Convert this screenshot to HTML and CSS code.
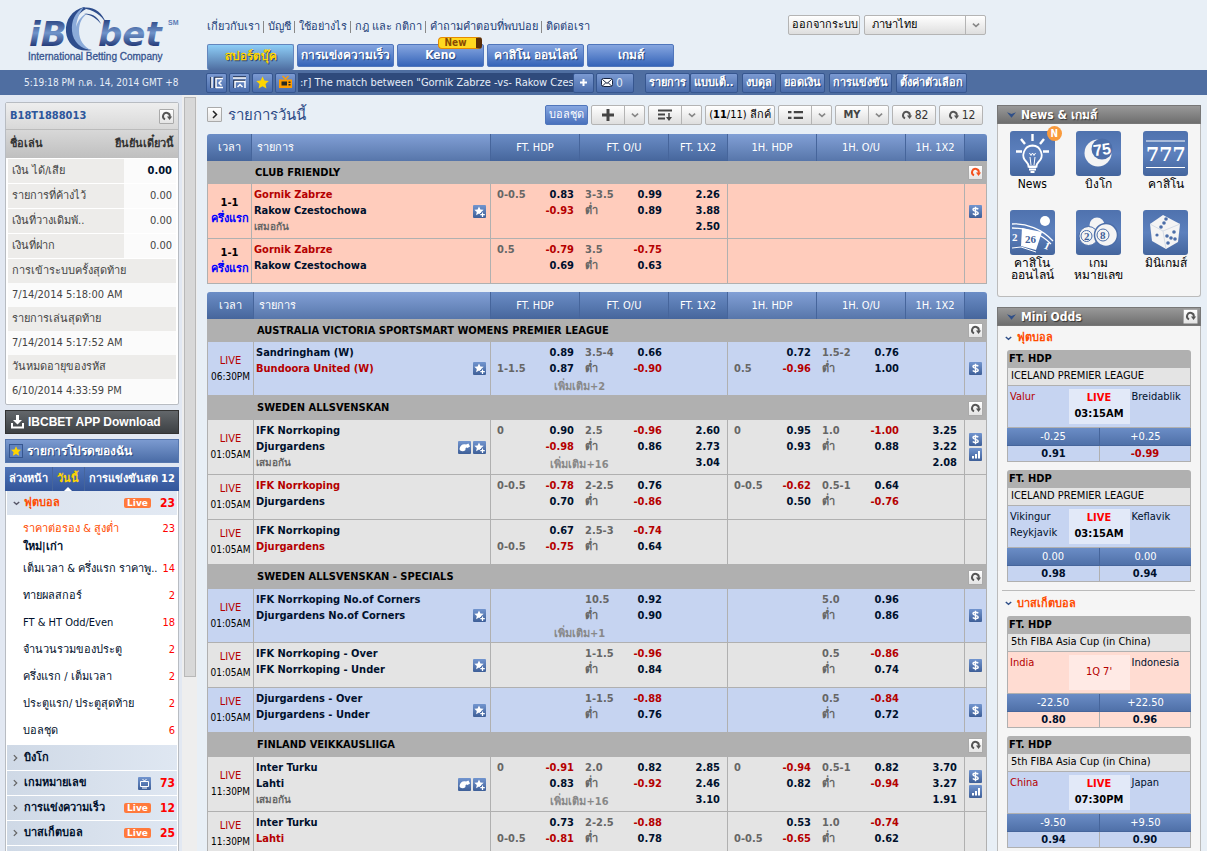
FILE: index.html
```html
<!DOCTYPE html>
<html lang="th">
<head>
<meta charset="utf-8">
<title>IBCBET</title>
<link rel="stylesheet" href="styles.css">
</head>
<body>
<svg class="defs" aria-hidden="true">
  <linearGradient id="g-blue" x1="0" y1="0" x2="0" y2="1"><stop offset="0" stop-color="#7295cf"/><stop offset="1" stop-color="#3e5f98"/></linearGradient>
  <symbol id="i-refresh" viewBox="0 0 15 15"><path d="M5.8 10.8A3.9 3.9 0 1 1 11.2 8" fill="none" stroke="currentColor" stroke-width="2.2"/><path d="M8 7.6h6l-3 4z" fill="currentColor"/></symbol>
  <symbol id="i-star" viewBox="0 0 16 16"><path d="M8 1.5l2 4.4 4.700.500-3.500 3.200 1 4.700L8 11.900l-4.200 2.400 1-4.700L1.300 6.400 6 5.900z" fill="currentColor"/></symbol>
  <symbol id="i-staradd" viewBox="0 0 13 13"><rect width="13" height="13" rx="1" fill="url(#g-blue)"/><path d="M6 1.500l1.400 3 3.300.300-2.500 2.200.700 3.200L6 8.600l-2.900 1.600.700-3.200L1.300 4.800l3.300-.300z" fill="#fff"/><path d="M9.500 7v5M7 9.500h5" stroke="#4b6ea8" stroke-width="3"/><path d="M9.500 7.500v4.500M7.300 9.700h4.500" stroke="#fff" stroke-width="1.200"/></symbol>
  <symbol id="i-whistle" viewBox="0 0 13 13"><rect width="13" height="13" rx="1" fill="url(#g-blue)"/><path d="M1.500 8C2 4 5 2.500 8 3.500L10.500 2.500l1.500 3-2.500 1.500C8.500 5.500 7 7 7.500 9 5.500 11 2 10.500 1.500 8z" fill="#fff"/></symbol>
  <symbol id="i-dollar" viewBox="0 0 13 13"><rect width="13" height="13" rx="1" fill="url(#g-blue)"/><path d="M9.300 4.300C8 2.900 4 2.900 4 4.800c0 2 5.200 1.200 5.200 3.300 0 2-4 2-5.400.400M6.500 1.800v9.400" fill="none" stroke="#fff" stroke-width="1.400"/></symbol>
  <symbol id="i-bars" viewBox="0 0 13 13"><rect width="13" height="13" rx="1" fill="url(#g-blue)"/><path d="M3 8h2v2.500H3zM6 6h2v4.500H6zM9 3h2v7.500H9z" fill="#fff"/></symbol>
  <symbol id="i-down" viewBox="0 0 9 6"><path d="M1 1l3.500 3L8 1" fill="none" stroke="currentColor" stroke-width="1.800"/></symbol>
  <symbol id="i-right" viewBox="0 0 6 9"><path d="M1 1l3.500 3.500L1 8" fill="none" stroke="currentColor" stroke-width="1.500"/></symbol>
  <symbol id="i-tri" viewBox="0 0 10 6"><path d="M0 0l5 2 5-2-5 6z" fill="currentColor"/></symbol>
</svg>

<header class="top">
  <svg class="logo" viewBox="0 0 190 70" role="img" aria-label="ibcbet International Betting Company">
    <defs><linearGradient id="g-logo" gradientUnits="userSpaceOnUse" x1="0" y1="19" x2="0" y2="47"><stop offset="0" stop-color="#27407f"/><stop offset=".5" stop-color="#7094ca"/><stop offset="1" stop-color="#1f3574"/></linearGradient></defs>
    <g class="logo-word" fill="url(#g-logo)"><text x="29" y="46">iB</text><text x="98" y="46">bet</text></g>
    <path d="M84 7C72 10 65 20 66 32c1 12 11 21 26 18-10-1-18-9-18-20 0-9 4-17 12-21z" fill="#2e4d8c"/>
    <path d="M84 7c-9 5-13 14-12 24 1 11 9 18 19 19-7-3-12-10-12-19 0-8 3-14 9-18-6 2-10 7-12 14 1-9 4-15 8-20z" fill="#8cabd9"/>
    <path d="M82 8c11-2 20 4 24 15-5-8-12-13-24-15z" fill="#2e4d8c"/>
    <path d="M84 14c8-1 14 3 17 10-4-5-9-9-17-10z" fill="#2e4d8c"/>
    <text class="logo-sm" x="168" y="25">SM</text>
    <text class="logo-sub" x="28" y="60">International Betting Company</text>
  </svg>
  <div class="top-main">
    <div class="top-row">
      <nav class="links"><a href="#">เกี่ยวกับเรา</a><a href="#">บัญชี</a><a href="#">ใช้อย่างไร</a><a href="#">กฎ และ กติกา</a><a href="#">คำถามคำตอบที่พบบ่อย</a><a href="#">ติดต่อเรา</a></nav>
      <div class="account"><button class="btn">ออกจากระบบ</button><span class="lang"><select aria-label="ภาษา"><option>ภาษาไทย</option></select><svg class="chev"><use href="#i-down"/></svg></span></div>
    </div>
    <nav class="tabs">
      <a class="tab on" href="#">สปอร์ตบุ๊ค</a><a class="tab w97" href="#">การแข่งความเร็ว</a><a class="tab keno" href="#">Keno<span class="new">New</span></a><a class="tab w97" href="#">คาสิโน ออนไลน์</a><a class="tab" href="#">เกมส์</a>
    </nav>
  </div>
</header>

<div class="bar">
  <time class="clock">5:19:18 PM ก.ค. 14, 2014 GMT +8</time>
  <div class="bar-main">
    <button class="sq" aria-label="ซ่อนเมนู"><svg viewBox="0 0 15 15"><path d="M2 2v11M6 13V2.500h7.500" fill="none" stroke="#1c2c4e" stroke-width="1.500"/><path d="M3 2v11M7 13V3.500h7M7 12.500h7" fill="none" stroke="#fff" stroke-width="1.500"/><path d="M12.500 5.500L10 8l2.500 2.500" fill="none" stroke="#fff" stroke-width="1.500"/></svg></button>
    <button class="sq" aria-label="ซ่อนส่วนหัว"><svg viewBox="0 0 15 15"><path d="M1 2h13M2 13V5.500h11" fill="none" stroke="#1c2c4e" stroke-width="1.500"/><path d="M1 3h13M3 13V6.500h10V13" fill="none" stroke="#fff" stroke-width="1.500"/><path d="M5.500 12L8 9.500l2.500 2.500" fill="none" stroke="#fff" stroke-width="1.500"/></svg></button>
    <button class="sq gold" aria-label="รายการโปรด"><svg><use href="#i-star"/></svg></button>
    <button class="sq" aria-label="ทีวี"><svg viewBox="0 0 15 15"><path d="M1 4.500h13v8.500H1z" fill="#ff9c00"/><path d="M4.500 1l3 3 3-3" fill="none" stroke="#ff9c00" stroke-width="1.400"/><path d="M3.500 6.500h5.500v4H3.500zM10.500 6.500h2v1.500h-2zM10.500 9h2v1.500h-2z" fill="#2a2a20"/></svg></button>
    <div class="ticker">:r] The match between "Gornik Zabrze -vs- Rakow Czesl</div>
    <button class="sq plus" aria-label="เพิ่มเติม"><svg viewBox="0 0 15 15"><path d="M7.500 4v7M4 7.500h7" stroke="#fff" stroke-width="2"/></svg></button>
    <button class="mail"><svg viewBox="0 0 12 9"><rect x=".5" y=".5" width="11" height="8" rx="2" fill="#fff" stroke="#16233f"/><path d="M1.500 1.500L6 5.500l4.500-4M1.500 8L5 4.500M10.500 8L7 4.500" fill="none" stroke="#16233f"/></svg>0</button>
    <nav class="menu"><span class="pair"><a href="#">รายการ</a><a href="#">แบบเต็..</a></span><a href="#">งบดุล</a><a href="#">ยอดเงิน</a><a href="#">การแข่งขัน</a><a href="#">ตั้งค่าตัวเลือก</a></nav>
  </div>
</div>

<div class="page">
<aside class="left">
  <div class="left-body">
    <section class="acct">
      <div class="acct-id"><b>B18T1888013</b><button class="rf" aria-label="รีเฟรช"><svg><use href="#i-refresh"/></svg></button></div>
      <div class="acct-nick"><b>ชื่อเล่น</b><b>ยืนยันเดี๋ยวนี้</b></div>
      <dl class="money">
        <dt>เงิน ได้/เสีย</dt><dd class="strong">0.00</dd>
        <dt>รายการที่ค้างไว้</dt><dd>0.00</dd>
        <dt>เงินที่วางเดิมพั..</dt><dd>0.00</dd>
        <dt>เงินที่ฝาก</dt><dd>0.00</dd>
      </dl>
      <dl class="dates">
        <dt>การเข้าระบบครั้งสุดท้าย</dt><dd>7/14/2014 5:18:00 AM</dd>
        <dt>รายการเล่นสุดท้าย</dt><dd>7/14/2014 5:17:52 AM</dd>
        <dt>วันหมดอายุของรหัส</dt><dd>6/10/2014 4:33:59 PM</dd>
      </dl>
    </section>
    <button class="app"><svg viewBox="0 0 13 14"><path d="M5 0h3v5h3L6.500 9.500 2 5h3z" fill="#fff"/><path d="M1 8v4.500h11V8" fill="none" stroke="#fff" stroke-width="2"/></svg>IBCBET APP Download</button>
    <button class="fav"><span class="favstar"><svg><use href="#i-star"/></svg></span>รายการโปรดของฉัน</button>
    <nav class="days"><a href="#">ล่วงหน้า</a><a class="on" href="#">วันนี้</a><a href="#">การแข่งขันสด 12</a></nav>
    <nav class="sports">
      <a class="sport open" href="#"><svg class="cd"><use href="#i-down"/></svg><span class="name">ฟุตบอล</span><span class="live">Live</span><b>23</b></a>
      <div class="bets">
        <a class="bet hot" href="#"><span>ราคาต่อรอง &amp; สูงต่ำ</span><i>23</i></a>
        <div class="newold"><a href="#">ใหม่</a>|<a href="#">เก่า</a></div>
        <a class="bet" href="#"><span>เต็มเวลา &amp; ครึ่งแรก ราคาพู..</span><i>14</i></a>
        <a class="bet" href="#"><span>ทายผลสกอร์</span><i>2</i></a>
        <a class="bet" href="#"><span>FT &amp; HT Odd/Even</span><i>18</i></a>
        <a class="bet" href="#"><span>จำนวนรวมของประตู</span><i>2</i></a>
        <a class="bet" href="#"><span>ครึ่งแรก / เต็มเวลา</span><i>2</i></a>
        <a class="bet" href="#"><span>ประตูแรก/ ประตูสุดท้าย</span><i>2</i></a>
        <a class="bet" href="#"><span>บอลชุด</span><i>6</i></a>
      </div>
      <a class="sport" href="#"><svg class="cr"><use href="#i-right"/></svg><span class="name">บิงโก</span></a>
      <a class="sport" href="#"><svg class="cr"><use href="#i-right"/></svg><span class="name">เกมหมายเลข</span><svg class="tv" viewBox="0 0 13 13"><rect width="13" height="13" rx="1" fill="url(#g-blue)"/><path d="M2.500 4.500h8v5h-8zM4.500 2l2 2 2-2M4 11h5" fill="none" stroke="#fff" stroke-width="1"/></svg><b>73</b></a>
      <a class="sport" href="#"><svg class="cr"><use href="#i-right"/></svg><span class="name">การแข่งความเร็ว</span><span class="live">Live</span><b>12</b></a>
      <a class="sport" href="#"><svg class="cr"><use href="#i-right"/></svg><span class="name">บาสเก็ตบอล</span><span class="live">Live</span><b>25</b></a>
      <a class="sport" href="#"><svg class="cr"><use href="#i-right"/></svg></a>
    </nav>
  </div>
  <div class="scroll"><div class="thumb"></div></div>
</aside>

<main class="main">
  <div class="tools">
    <button class="rf" aria-label="ขยาย"><svg class="go"><use href="#i-right"/></svg></button>
    <h1>รายการวันนี้</h1>
    <button class="btn blue">บอลชุด</button>
    <button class="btn split" aria-label="เพิ่ม"><span><svg viewBox="0 0 12 12"><path d="M6 0v12M0 6h12" stroke="#444" stroke-width="3"/></svg></span><svg class="chev"><use href="#i-down"/></svg></button>
    <button class="btn split" aria-label="เรียง"><span><svg viewBox="0 0 15 12"><path d="M0 1.500h14M0 5.500h7M0 9.500h7" stroke="#444" stroke-width="2"/><path d="M11 4v6" stroke="#444" stroke-width="1.500"/><path d="M8 8h6l-3 4z" fill="#444"/></svg></span><svg class="chev"><use href="#i-down"/></svg></button>
    <button class="btn leagues">(<b>11</b>/11) ลีกค์</button>
    <button class="btn split" aria-label="มุมมอง"><span><svg viewBox="0 0 13 8"><path d="M0 1.500h3M0 6.500h3M5 1.500h8M5 6.500h8" stroke="#444" stroke-width="2"/></svg></span><svg class="chev"><use href="#i-down"/></svg></button>
    <button class="btn split"><span><b>MY</b></span><svg class="chev"><use href="#i-down"/></svg></button>
    <button class="btn count"><svg><use href="#i-refresh"/></svg>82</button>
    <button class="btn count red"><svg><use href="#i-refresh"/></svg>12</button>
  </div>

  <table class="odds">
    <colgroup><col class="c-time"><col><col class="c-pair"><col class="c-pair"><col class="c-x"><col class="c-pair"><col class="c-pair"><col class="c-x"><col class="c-ico"></colgroup>
    <thead><tr><th>เวลา</th><th class="ev">รายการ</th><th>FT. HDP</th><th>FT. O/U</th><th>FT. 1X2</th><th class="lt">1H. HDP</th><th class="lt">1H. O/U</th><th class="lt">1H. 1X2</th><th></th></tr></thead>
    <tbody>
    <tr class="league"><td></td><td colspan="7">CLUB FRIENDLY</td><td><button class="rf red" aria-label="รีเฟรช"><svg><use href="#i-refresh"/></svg></button></td></tr>
    <tr class="live-row"><td class="time"><b>1-1</b><em>ครึ่งแรก</em></td><td class="event"><div class="ev-in"><div><p class="fav-team">Gornik Zabrze</p><p>Rakow Czestochowa</p><p class="draw">เสมอกัน</p></div><svg><use href="#i-staradd"/></svg></div></td>
      <td colspan="3"><div class="grp"><i class="hl">0-0.5</i><b class="hp">0.83</b><i class="ol">3-3.5</i><b class="op">0.99</b><b class="x">2.26</b><b class="hp neg">-0.93</b><i class="ol">ต่ำ</i><b class="op">0.89</b><b class="x">3.88</b><b class="x">2.50</b></div></td><td colspan="3"></td><td class="ico"><svg><use href="#i-dollar"/></svg></td></tr>
    <tr class="live-row"><td class="time"><b>1-1</b><em>ครึ่งแรก</em></td><td class="event"><div class="ev-in"><div><p class="fav-team">Gornik Zabrze</p><p>Rakow Czestochowa</p></div></div></td>
      <td colspan="3"><div class="grp"><i class="hl">0.5</i><b class="hp neg">-0.79</b><i class="ol">3.5</i><b class="op neg">-0.75</b><b class="hp">0.69</b><i class="ol">ต่ำ</i><b class="op">0.63</b></div></td><td colspan="3"></td><td></td></tr>
    </tbody>
  </table>

  <table class="odds second">
    <colgroup><col class="c-time"><col><col class="c-pair"><col class="c-pair"><col class="c-x"><col class="c-pair"><col class="c-pair"><col class="c-x"><col class="c-ico"></colgroup>
    <thead><tr><th>เวลา</th><th class="ev">รายการ</th><th>FT. HDP</th><th>FT. O/U</th><th>FT. 1X2</th><th class="lt">1H. HDP</th><th class="lt">1H. O/U</th><th class="lt">1H. 1X2</th><th></th></tr></thead>
    <tbody>
    <tr class="league"><td></td><td colspan="7">AUSTRALIA VICTORIA SPORTSMART WOMENS PREMIER LEAGUE</td><td><button class="rf" aria-label="รีเฟรช"><svg><use href="#i-refresh"/></svg></button></td></tr>
    <tr class="alt tall"><td class="time"><s>LIVE</s>06:30PM</td><td class="event"><div class="ev-in"><div><p>Sandringham (W)</p><p class="fav-team">Bundoora United (W)</p></div><svg><use href="#i-staradd"/></svg></div></td>
      <td colspan="3"><div class="grp"><b class="hp">0.89</b><i class="ol">3.5-4</i><b class="op">0.66</b><i class="hl">1-1.5</i><b class="hp">0.87</b><i class="ol">ต่ำ</i><b class="op neg">-0.90</b><a class="more" href="#">เพิ่มเติม+2</a></div></td>
      <td colspan="3"><div class="grp"><b class="hp">0.72</b><i class="ol">1.5-2</i><b class="op">0.76</b><i class="hl">0.5</i><b class="hp neg">-0.96</b><i class="ol">ต่ำ</i><b class="op">1.00</b></div></td><td class="ico"><svg><use href="#i-dollar"/></svg></td></tr>
    <tr class="league"><td></td><td colspan="7">SWEDEN ALLSVENSKAN</td><td><button class="rf" aria-label="รีเฟรช"><svg><use href="#i-refresh"/></svg></button></td></tr>
    <tr><td class="time"><s>LIVE</s>01:05AM</td><td class="event"><div class="ev-in"><div><p>IFK Norrkoping</p><p>Djurgardens</p><p class="draw">เสมอกัน</p></div><svg><use href="#i-whistle"/></svg><svg><use href="#i-staradd"/></svg></div></td>
      <td colspan="3"><div class="grp"><i class="hl">0</i><b class="hp">0.90</b><i class="ol">2.5</i><b class="op neg">-0.96</b><b class="x">2.60</b><b class="hp neg">-0.98</b><i class="ol">ต่ำ</i><b class="op">0.86</b><b class="x">2.73</b><a class="more" href="#">เพิ่มเติม+16</a><b class="x">3.04</b></div></td>
      <td colspan="3"><div class="grp"><i class="hl">0</i><b class="hp">0.95</b><i class="ol">1.0</i><b class="op neg">-1.00</b><b class="x">3.25</b><b class="hp">0.93</b><i class="ol">ต่ำ</i><b class="op">0.88</b><b class="x">3.22</b><b class="x">2.08</b></div></td><td class="ico"><svg><use href="#i-dollar"/></svg><svg><use href="#i-bars"/></svg></td></tr>
    <tr><td class="time"><s>LIVE</s>01:05AM</td><td class="event"><div class="ev-in"><div><p class="fav-team">IFK Norrkoping</p><p>Djurgardens</p></div></div></td>
      <td colspan="3"><div class="grp"><i class="hl">0-0.5</i><b class="hp neg">-0.78</b><i class="ol">2-2.5</i><b class="op">0.76</b><b class="hp">0.70</b><i class="ol">ต่ำ</i><b class="op neg">-0.86</b></div></td>
      <td colspan="3"><div class="grp"><i class="hl">0-0.5</i><b class="hp neg">-0.62</b><i class="ol">0.5-1</i><b class="op">0.64</b><b class="hp">0.50</b><i class="ol">ต่ำ</i><b class="op neg">-0.76</b></div></td><td></td></tr>
    <tr><td class="time"><s>LIVE</s>01:05AM</td><td class="event"><div class="ev-in"><div><p>IFK Norrkoping</p><p class="fav-team">Djurgardens</p></div></div></td>
      <td colspan="3"><div class="grp"><b class="hp">0.67</b><i class="ol">2.5-3</i><b class="op neg">-0.74</b><i class="hl">0-0.5</i><b class="hp neg">-0.75</b><i class="ol">ต่ำ</i><b class="op">0.64</b></div></td><td colspan="3"></td><td></td></tr>
    <tr class="league"><td></td><td colspan="7">SWEDEN ALLSVENSKAN - SPECIALS</td><td><button class="rf" aria-label="รีเฟรช"><svg><use href="#i-refresh"/></svg></button></td></tr>
    <tr class="alt tall"><td class="time"><s>LIVE</s>01:05AM</td><td class="event"><div class="ev-in"><div><p>IFK Norrkoping No.of Corners</p><p>Djurgardens No.of Corners</p></div><svg><use href="#i-staradd"/></svg></div></td>
      <td colspan="3"><div class="grp"><i class="ol">10.5</i><b class="op">0.92</b><i class="ol">ต่ำ</i><b class="op">0.90</b><a class="more" href="#">เพิ่มเติม+1</a></div></td>
      <td colspan="3"><div class="grp"><i class="ol">5.0</i><b class="op">0.96</b><i class="ol">ต่ำ</i><b class="op">0.86</b></div></td><td class="ico"><svg><use href="#i-dollar"/></svg></td></tr>
    <tr><td class="time"><s>LIVE</s>01:05AM</td><td class="event"><div class="ev-in"><div><p>IFK Norrkoping - Over</p><p>IFK Norrkoping - Under</p></div><svg><use href="#i-staradd"/></svg></div></td>
      <td colspan="3"><div class="grp"><i class="ol">1-1.5</i><b class="op neg">-0.96</b><i class="ol">ต่ำ</i><b class="op">0.84</b></div></td>
      <td colspan="3"><div class="grp"><i class="ol">0.5</i><b class="op neg">-0.86</b><i class="ol">ต่ำ</i><b class="op">0.74</b></div></td><td class="ico"><svg><use href="#i-dollar"/></svg></td></tr>
    <tr class="alt"><td class="time"><s>LIVE</s>01:05AM</td><td class="event"><div class="ev-in"><div><p>Djurgardens - Over</p><p>Djurgardens - Under</p></div><svg><use href="#i-staradd"/></svg></div></td>
      <td colspan="3"><div class="grp"><i class="ol">1-1.5</i><b class="op neg">-0.88</b><i class="ol">ต่ำ</i><b class="op">0.76</b></div></td>
      <td colspan="3"><div class="grp"><i class="ol">0.5</i><b class="op neg">-0.84</b><i class="ol">ต่ำ</i><b class="op">0.72</b></div></td><td class="ico"><svg><use href="#i-dollar"/></svg></td></tr>
    <tr class="league"><td></td><td colspan="7">FINLAND VEIKKAUSLIIGA</td><td><button class="rf" aria-label="รีเฟรช"><svg><use href="#i-refresh"/></svg></button></td></tr>
    <tr><td class="time"><s>LIVE</s>11:30PM</td><td class="event"><div class="ev-in"><div><p>Inter Turku</p><p>Lahti</p><p class="draw">เสมอกัน</p></div><svg><use href="#i-whistle"/></svg><svg><use href="#i-staradd"/></svg></div></td>
      <td colspan="3"><div class="grp"><i class="hl">0</i><b class="hp neg">-0.91</b><i class="ol">2.0</i><b class="op">0.82</b><b class="x">2.85</b><b class="hp">0.83</b><i class="ol">ต่ำ</i><b class="op neg">-0.92</b><b class="x">2.46</b><a class="more" href="#">เพิ่มเติม+16</a><b class="x">3.10</b></div></td>
      <td colspan="3"><div class="grp"><i class="hl">0</i><b class="hp neg">-0.94</b><i class="ol">0.5-1</i><b class="op">0.82</b><b class="x">3.70</b><b class="hp">0.82</b><i class="ol">ต่ำ</i><b class="op neg">-0.94</b><b class="x">3.27</b><b class="x">1.91</b></div></td><td class="ico"><svg><use href="#i-dollar"/></svg><svg><use href="#i-bars"/></svg></td></tr>
    <tr><td class="time"><s>LIVE</s>11:30PM</td><td class="event"><div class="ev-in"><div><p>Inter Turku</p><p class="fav-team">Lahti</p></div></div></td>
      <td colspan="3"><div class="grp"><b class="hp">0.73</b><i class="ol">2-2.5</i><b class="op neg">-0.88</b><i class="hl">0-0.5</i><b class="hp neg">-0.81</b><i class="ol">ต่ำ</i><b class="op">0.78</b></div></td>
      <td colspan="3"><div class="grp"><b class="hp">0.53</b><i class="ol">1.0</i><b class="op neg">-0.74</b><i class="hl">0-0.5</i><b class="hp neg">-0.65</b><i class="ol">ต่ำ</i><b class="op">0.62</b></div></td><td></td></tr>
    </tbody>
  </table>
</main>

<aside class="right">
  <section class="panel news">
    <h2><svg><use href="#i-tri"/></svg>News &amp; เกมส์</h2>
    <div class="tiles">
      <a class="tile" href="#"><span class="pic"><svg viewBox="0 0 45 45"><path d="M22.500 14.500a9.500 9.500 0 0 0-6 16.500c1.500 1.500 2 2.500 2 4.500h8c0-2 .5-3 2-4.500a9.500 9.500 0 0 0-6-16.500z" fill="none" stroke="#fff" stroke-width="1.800"/><path d="M21 34l-1-8M24 34l1-8M19.500 22l1.500 2.500 1.500-2.500 1.500 2.500 1.500-2.500" fill="none" stroke="#fff"/><path d="M18.500 36h8M19 38.500h7M20.500 41h4" stroke="#fff" stroke-width="1.800"/><path d="M22.500 3v7M11 8l4 5M34 8l-4 5M6 20.500h6M33 20.500h6" stroke="#fff" stroke-width="2.400"/></svg><em class="n">N</em></span>News</a>
      <a class="tile" href="#"><span class="pic"><svg viewBox="0 0 45 45"><circle cx="22" cy="22" r="13.500" fill="#f4f4f4"/><circle cx="26" cy="18" r="10.500" fill="#4c6ea9"/><text x="17" y="24" class="num" transform="rotate(-8 26 18)">75</text></svg></span>บิงโก</a>
      <a class="tile" href="#"><span class="pic"><svg viewBox="0 0 45 45"><path d="M3 10h39M3 36.500h39" stroke="#fff"/><text x="3" y="30" class="seven">777</text></svg></span>คาสิโน</a>
      <a class="tile" href="#"><span class="pic"><svg viewBox="0 0 45 45"><path d="M2 14c14-1 30 5 41 17M2 18c14 0 28 5 39 16" fill="none" stroke="#fff" stroke-width="1.300"/><path d="M12 18l20 4-6 18-15-4z" fill="#fff"/><path d="M2 38l9-1 15 5" fill="none" stroke="#fff"/><circle cx="35" cy="11" r="5" fill="#fff"/><text x="15" y="33" class="wheel dark">26</text><text x="2" y="31" class="wheel">2</text><text x="33" y="38" class="wheel" transform="rotate(25 33 38)">1</text></svg></span>คาสิโน<br>ออนไลน์</a>
      <a class="tile" href="#"><span class="pic"><svg viewBox="0 0 45 45"><circle cx="21" cy="15" r="7.500" fill="#f4f4f4"/><circle cx="12.500" cy="26" r="9.500" fill="#f4f4f4" stroke="#4c6ea9"/><circle cx="30" cy="25" r="11.500" fill="#f4f4f4" stroke="#4c6ea9" stroke-width="1.500"/><circle cx="10.500" cy="26" r="5.500" fill="none" stroke="#4c6ea9"/><circle cx="27" cy="25" r="6" fill="none" stroke="#4c6ea9"/><text x="8" y="30" class="wheel dark">2</text><text x="24" y="29" class="wheel dark">8</text></svg></span>เกม<br>หมายเลข</a>
      <a class="tile" href="#"><span class="pic"><svg viewBox="0 0 45 45"><path d="M20 5l17 9-2 18-12 7L9 31 7 14z" fill="#f4f4f4"/><path d="M7 14l13 7 17-7M20 21l3 18" fill="none" stroke="#cdd5e2" stroke-width=".8"/><g fill="#4c6ea9"><circle cx="23" cy="9" r="1.800"/><circle cx="21" cy="13" r="1.800"/><circle cx="18" cy="17" r="1.800"/><circle cx="14" cy="25" r="1.600"/><circle cx="24" cy="26" r="1.800"/><circle cx="31" cy="22" r="1.800"/><circle cx="28" cy="28" r="1.800"/><circle cx="25" cy="33" r="1.800"/><circle cx="32" cy="29" r="1.800"/></g></svg></span>มินิเกมส์</a>
    </div>
  </section>
  <section class="panel mini">
    <h2><svg><use href="#i-tri"/></svg>Mini Odds<button class="rf" aria-label="รีเฟรช"><svg><use href="#i-refresh"/></svg></button></h2>
    <h3><svg><use href="#i-down"/></svg>ฟุตบอล</h3>
    <article class="card"><h4>FT. HDP</h4><p class="lg">ICELAND PREMIER LEAGUE</p><div class="match"><span class="fav-team">Valur</span><strong><s>LIVE</s>03:15AM</strong><span>Breidablik</span></div><div class="line"><span>-0.25</span><span>+0.25</span></div><div class="price"><b>0.91</b><b class="neg">-0.99</b></div></article>
    <article class="card"><h4>FT. HDP</h4><p class="lg">ICELAND PREMIER LEAGUE</p><div class="match"><span>Vikingur Reykjavik</span><strong><s>LIVE</s>03:15AM</strong><span>Keflavik</span></div><div class="line"><span>0.00</span><span>0.00</span></div><div class="price"><b>0.98</b><b>0.94</b></div></article>
    <h3 class="rule"><svg><use href="#i-down"/></svg>บาสเก็ตบอล</h3>
    <article class="card pink"><h4>FT. HDP</h4><p class="lg">5th FIBA Asia Cup (in China)</p><div class="match"><span class="fav-team">India</span><strong class="q">1Q 7'</strong><span>Indonesia</span></div><div class="line"><span>-22.50</span><span>+22.50</span></div><div class="price"><b>0.80</b><b>0.96</b></div></article>
    <article class="card"><h4>FT. HDP</h4><p class="lg">5th FIBA Asia Cup (in China)</p><div class="match"><span class="fav-team">China</span><strong><s>LIVE</s>07:30PM</strong><span>Japan</span></div><div class="line"><span>-9.50</span><span>+9.50</span></div><div class="price"><b>0.94</b><b>0.90</b></div></article>
  </section>
</aside>
</div>
</body>
</html>
```
FILE: styles.css
```css
* { box-sizing: border-box; }
html, body { margin: 0; height: 100vh; overflow: hidden; }
body {
  display: flex; flex-direction: column;
  background: #e8eff6; color: #00102c;
  font: 11px/16px "DejaVu Sans Condensed", Tahoma, "Noto Sans", sans-serif;
}
a { color: inherit; text-decoration: none; }
button, select { font: inherit; color: inherit; margin: 0; padding: 0; }
p, h1, h2, h3, h4, dl, dd { margin: 0; }
i, em { font-style: normal; }
s { text-decoration: none; }
.defs { position: absolute; width: 0; height: 0; }

/* header */
.top { display: flex; flex: none; height: 70px; }
.logo { flex: none; width: 190px; height: 70px; margin-right: 17px; }
.logo-word { font: italic bold 34px "DejaVu Sans", sans-serif; }
.logo-sm { font: bold 7px "Liberation Sans", sans-serif; fill: #5b7bb5; }
.logo-sub { font: 10px "Liberation Sans", sans-serif; fill: #35538f; stroke: #35538f; stroke-width: .3px; }
.top-main { flex: 1; display: flex; flex-direction: column; justify-content: space-between; }
.top-row { display: flex; align-items: center; padding-top: 15px; width: 779px; max-width: 100%; justify-content: space-between; }
.links { display: flex; padding-top: 3px; color: #213d78; white-space: nowrap; }
.links a { padding: 0 3px 0 4px; border-left: 1px solid #888; line-height: 12px; }
.links a:first-child { padding-left: 0; border: 0; }
.account { display: flex; gap: 4px; }
.btn {
  height: 20px; border: 1px solid #b4b4b4; border-radius: 2px; padding: 0 3px;
  background: linear-gradient(#fff, #dedede); color: #000; white-space: nowrap; line-height: 16px;
}
.account .btn { width: 72px; }
.lang { position: relative; width: 122px; border: 1px solid #b4b4b4; border-radius: 2px; background: linear-gradient(#fff, #dedede); height: 20px; display: flex; }
.lang select { appearance: none; flex: 1; border: 0; background: none; color: #000; padding: 0 7px; }
.chev { width: 20px; height: 18px; padding: 6px 5px 5px 6px; border-left: 1px solid #b4b4b4; color: #888; flex: none; }
.tabs { display: flex; gap: 3px; }
.tab {
  position: relative; width: 87px; height: 23px; margin-bottom: 3px; border: 1px solid #5076bb; border-radius: 2px;
  background: linear-gradient(#86a6e0, #3564b8); color: #fff; text-align: center; line-height: 20px;
  font-weight: bold; font-size: 12px; white-space: nowrap; text-shadow: 1px 1px 0 #254680;
}
.w97 { width: 97px; }
.tab.on { height: 26px; margin: 0; border-bottom: 0; border-color: #6386bd; background: linear-gradient(#8dcdf6, #4f6ea1); color: #ffd500; line-height: 23px; }
.new {
  position: absolute; right: 1px; top: -8px; width: 44px; height: 12px; padding-right: 4px;
  border: 1px solid #e68a00; border-right: 6px solid #5a2d06; border-radius: 4px 3px 3px 4px;
  background: #ffd820; color: #8a4a00; font-size: 10px; line-height: 10px; text-shadow: none;
}

/* blue bar */
.bar { display: flex; flex: none; height: 25px; background: #4f6ea1; align-items: center; color: #fff; }
.clock { width: 206px; padding-left: 24px; color: #e6edf8; white-space: nowrap; font-size: 10px; }
.bar-main { flex: 1; display: flex; align-items: center; gap: 2px; min-width: 0; }
.sq, .mail, .menu a { height: 20px; border: 1px solid #36568f; border-radius: 2px; background: linear-gradient(#7b9ad2, #4a6caa); color: #fff; }
.sq { width: 21px; display: grid; place-items: center; flex: none; }
.sq svg { width: 15px; height: 15px; }
.gold, .favstar { color: #ffd500; }
.ticker { width: 277px; height: 19px; background: #2f4a7c; overflow: hidden; white-space: nowrap; line-height: 19px; padding-left: 2px; color: #e6edf8; }
.bar .plus { margin-left: -4px; }
.mail { width: 38px; display: flex; align-items: center; gap: 3px; padding-left: 4px; color: #dfe7f4; font-size: 12px; }
.mail svg { width: 12px; height: 9px; }
.menu { display: flex; gap: 4px; margin-left: 9px; font-weight: bold; white-space: nowrap; }
.menu a { padding: 0 3px; line-height: 18px; text-shadow: 1px 1px 0 #2c4a82; }
.pair { display: flex; }

/* columns */
.page { flex: 1; display: flex; min-height: 0; }
.left { display: flex; width: 207px; flex: none; background: linear-gradient(90deg, #e2e8f2 182px, #eee 182px, #eee 197px, #e8eff6 197px); }
.left-body { width: 174px; margin: 7px 4px 0 5px; overflow: hidden; }
.scroll { width: 14px; padding-top: 2px; }
.thumb { width: 12px; height: 580px; margin-left: 1px; background: #d8d8d8; border: 1px solid #b8b8b8; }
.rf { width: 15px; height: 15px; border: 1px solid #aaa; border-radius: 1px; background: linear-gradient(#fff, #e4e4e4); color: #555; display: grid; place-items: center; flex: none; }
.rf svg { width: 13px; height: 13px; }
.rf.red, .red svg { color: #f4511e; }

/* account box */
.acct { border: 1px solid #b8bcc2; border-radius: 2px; background: #fff; padding-bottom: 1px; }
.acct-id { display: flex; justify-content: space-between; align-items: center; height: 27px; padding: 0 4px; background: linear-gradient(#eee, #d8d8d8); border-bottom: 1px solid #bbb; color: #2c569c; }
.acct-nick { display: flex; justify-content: space-between; align-items: center; height: 28px; padding: 0 4px; background: linear-gradient(#d8d8d8, #bfbfbf); color: #333; }
.money, .dates { margin: 0 2px; color: #444; }
.money { display: grid; grid-template-columns: 1fr 52px; }
.money dt, .money dd { height: 25px; line-height: 24px; padding: 0 4px; border-top: 1px solid #fff; }
.money dt, .dates dt { background: #edecea; }
.money dd { text-align: right; background: #fbfbfb; }
.money .strong { font-weight: bold; color: #00102c; }
.dates { border-top: 1px solid #fff; }
.dates dt, .dates dd { height: 24px; line-height: 24px; padding: 0 4px; }
.dates dd { background: #fbfbfb; }

.app { display: flex; align-items: center; gap: 4px; width: 100%; height: 24px; margin-top: 5px; padding-left: 5px; border: 1px solid #333; background: linear-gradient(#63676b, #3c4043); color: #fff; font: bold 12px "Liberation Sans", Arial, sans-serif; }
.app svg { width: 13px; height: 14px; }
.fav { display: flex; align-items: center; gap: 4px; width: 100%; height: 24px; margin-top: 5px; padding-left: 3px; border: 1px solid #5777ad; background: linear-gradient(#7b9ad0, #4a6ca6); color: #fff; font-weight: bold; font-size: 12px; text-shadow: 1px 1px 0 #2c4a82; }
.favstar { display: grid; width: 14px; height: 14px; border: 1px solid #36568f; background: #5f82c0; }
.favstar svg { width: 12px; height: 12px; }
.days { display: flex; height: 24px; margin-top: 4px; background: linear-gradient(#4f74b8, #33559a); color: #fff; font-weight: bold; line-height: 24px; white-space: nowrap; overflow: hidden; }
.days a { padding: 0 2px; flex: auto; text-align: center; }
.days .on { position: relative; color: #ffd500; border: solid #46659b; border-width: 0 1px; }
.days .on::after { content: ""; position: absolute; left: 50%; bottom: 0; margin-left: -4px; border: 4px solid transparent; border-top: 0; border-bottom-color: #fff; }
.sports { border: 1px solid #b8bcc2; border-top: 0; background: #fff; padding: 0 1px; }
.sport { display: flex; align-items: center; height: 25px; padding: 0 2px 0 6px; border-bottom: 1px solid #fff; background: linear-gradient(90deg, #cfd9e6, #dfe7f2); font-weight: bold; }
.sport.open { color: #ff4b00; background: linear-gradient(90deg, #dbe3ee, #e2e9f3); }
.cd { width: 7px; height: 5px; color: #556; }
.cr { width: 5px; height: 8px; margin-right: 2px; color: #666; }
.name { flex: 1; padding-left: 4px; white-space: nowrap; }
.sport b { width: 24px; text-align: right; color: #f00; font-size: 12px; }
.live { width: 27px; height: 10px; border-radius: 2px; background: #ff7a3c; color: #fff; font: bold 9px/10px "DejaVu Sans", sans-serif; text-align: center; }
.tv { width: 13px; height: 13px; }
.bets { padding: 0 2px 1px 16px; }
.bet { display: flex; justify-content: space-between; height: 27px; line-height: 27px; white-space: nowrap; }
.bet i { color: #f00; }
.bet.hot { height: 23px; line-height: 26px; color: #ff4b00; }
.newold { height: 16px; font-weight: bold; line-height: 16px; }
.bets + .sport { height: 26px; }

/* main */
.main { flex: 1; min-width: 780px; }
.tools { display: flex; gap: 3px; height: 39px; padding: 10px 4px 0 0; }
.tools .rf { margin: 2px 3px 0 0; }
.tools .go { width: 6px; height: 9px; color: #222; }
.tools h1 { flex: 1; font-size: 15px; font-weight: normal; line-height: 20px; color: #2c4a86; }
.tools .btn { height: 20px; display: flex; align-items: center; justify-content: center; }
.tools .blue { width: 43px; border-color: #5076bb; background: linear-gradient(#86a6e0, #4a72bd); color: #fff; }
.tools .split { width: 54px; padding: 0; }
.split span { flex: 1; display: grid; place-items: center; color: #444; }
.split span svg { height: 12px; max-width: 15px; }
.leagues { width: 70px; }
.count { width: 44px; font-size: 12px; gap: 2px; color: #333; }
.count svg { width: 13px; height: 13px; color: #555; }

.odds { width: 100%; border-collapse: separate; border-spacing: 0; table-layout: fixed; margin-bottom: 8px; }
.c-time { width: 45px; } .c-pair { width: 89px; } .c-x { width: 59px; } .c-ico { width: 22px; }
.second .c-time { width: 47px; }
.odds th { height: 27px; padding: 0; background: linear-gradient(#6b8dc6, #46669c); color: #fff; font-weight: normal; border-right: 1px solid #46659b; }
.odds th.ev { text-align: left; padding-left: 5px; }
.odds th.ev, .odds th.lt { background: linear-gradient(#82a0d6, #5776aa); }
.odds th:first-child { border-radius: 3px 0 0 0; }
.odds th:last-child { border: 0; border-radius: 0 3px 0 0; }
.odds td { padding: 3px 0; background: #e4e4e4; border: solid #b0b0b0; border-width: 0 1px 1px 0; vertical-align: top; }
.odds td:first-child { border-left-width: 1px; }
.odds .alt td { background: #c6d4f1; }
.odds .live-row td { background: #ffccbc; }
.odds .league td { height: 24px; padding: 0 0 0 3px; background: #b0b0b0; border: 0; font-weight: bold; color: #000; vertical-align: middle; }
.odds thead + tbody .league:first-child td { height: 23px; }
.odds .league td:last-child { padding: 0 3px; }
.odds .time { text-align: center; color: #000; vertical-align: middle; font-size: 10px; }
.time b, .time em, .time s { display: block; font-size: 11px; }
.time s { color: #b50000; }
.time em { color: #00f; font-weight: bold; }
.ev-in { display: flex; align-items: center; gap: 2px; min-height: 38px; padding: 0 4px 0 2px; font-weight: bold; }
.tall .ev-in { min-height: 47px; }
.ev-in > div { flex: 1; align-self: flex-start; }
.ev-in svg, .ico svg { width: 13px; height: 13px; display: block; }
.fav-team, .neg { color: #b50000; }
.draw { color: #666; font-size: 10px; }
.odds .ico { vertical-align: middle; padding: 0; }
.ico svg { margin: 2px 4px; }
.grp { display: grid; grid-template-columns: 39px 38px 50px 38px 1fr; grid-auto-rows: 16px; padding: 0 7px 0 6px; }
.tall .grp { grid-template-rows: 16px 16px 15px; }
.grp i { color: #666; font-weight: bold; }
.grp b { text-align: right; }
.hl { grid-column: 1; } .hp { grid-column: 2; } .ol { grid-column: 3; padding-left: 11px; } .op { grid-column: 4; } .x { grid-column: 5; }
.more { grid-column: 1 / span 4; text-align: center; color: #888; font-weight: bold; line-height: 20px; }

/* right */
.right { width: 204px; flex: none; margin: 10px 6px 0 10px; }
.panel { background: #f5f5f5; border: 1px solid #bbb; border-top: 0; border-radius: 3px; }
.panel h2 { display: flex; align-items: center; height: 19px; margin: 0 -1px; padding: 0 2px 0 9px; background: linear-gradient(#999, #6e6e6e); border: 1px solid #777; color: #fff; font-size: 12px; font-weight: bold; text-shadow: 1px 1px 1px #333; }
.panel h2 > svg { width: 9px; height: 6px; margin-right: 5px; color: #2f4f88; }
.panel h2 .rf { margin-left: auto; }
.news { min-height: 192px; margin-bottom: 10px; }
.tiles { display: grid; grid-template-columns: repeat(3, 1fr); row-gap: 14px; padding: 7px 1px 0; }
.tile { text-align: center; color: #000; line-height: 12px; font-size: 12px; min-height: 65px; }
.pic { position: relative; display: block; width: 45px; height: 45px; margin: 0 auto 2px; border-radius: 3px; background: linear-gradient(#4f72ae, #5c80bd 50%, #44659d); }
.pic svg { display: block; width: 45px; height: 45px; }
.num { font: bold 16px "Liberation Sans", sans-serif; fill: #fff; }
.seven { font: bold 19px "DejaVu Serif", serif; fill: #fff; }
.wheel { font: bold 11px "Liberation Serif", serif; fill: #fff; }
.wheel.dark { fill: #3f5f98; }
.n { position: absolute; right: -7px; top: -5px; width: 15px; height: 15px; border-radius: 50%; background: #f99a3c; color: #fff; font-weight: bold; font-size: 10px; line-height: 15px; }
.mini { padding: 0 9px 4px; }
.mini h2 { margin: 0 -10px; }
.mini h3 { display: flex; align-items: center; height: 24px; margin-left: -2px; color: #ff4b00; font-size: 11px; }
.mini h3 svg { width: 7px; height: 5px; margin-right: 5px; color: #2f4f88; }
.mini h3.rule { height: 26px; margin: 0 -4px 0 -5px; padding-left: 3px; border-top: 1px solid #bbb; }
.card { margin-bottom: 8px; }
.card h4 { height: 18px; padding-left: 2px; border-radius: 3px 3px 0 0; background: #b0b0b0; color: #000; font-size: 11px; line-height: 17px; }
.lg { height: 18px; padding-left: 3px; border: 1px solid #b0b0b0; border-top: 0; background: #e4e4e4; color: #000; white-space: nowrap; overflow: hidden; }
.match, .price { border: 1px solid #b0b0b0; border-top: 0; background: #c6d4f1; }
.match { display: grid; grid-template-columns: 1fr 61px 1fr; height: 42px; }
.match > span { padding: 3px 2px; }
.match strong { height: 35px; margin-top: 3px; padding-top: 1px; background: #e2e9f8; text-align: center; color: #000; }
.match s { display: block; color: #f00; }
.match .q { font-weight: normal; color: #b50000; padding-top: 9px; background: #ffeae5; }
.line, .price { display: grid; grid-template-columns: 1fr 1fr; text-align: center; }
.line { height: 18px; background: linear-gradient(#6b8dc6, #4f70a8); color: #fff; border-bottom: 1px solid #46659b; line-height: 18px; }
.line span + span, .price b + b { border-left: 1px solid #b0b0b0; }
.line span + span { border-color: #46659b; }
.price { height: 16px; line-height: 15px; }
.pink .match, .pink .price { background: #ffdcd2; }
```
